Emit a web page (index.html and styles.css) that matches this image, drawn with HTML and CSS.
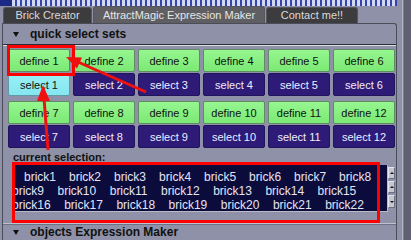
FILE: index.html
```html
<!DOCTYPE html>
<html lang="en">
<head>
    <meta charset="UTF-8">
    <title>AttractMagic Expression Maker</title>
    <link rel="stylesheet" href="styles.css">
</head>
<body>
    <div class="window">
        <div class="main">
            <div class="top-strip"></div>
            <div class="tabs">
                <div class="tab tab-brick">Brick Creator</div>
                <div class="tab tab-active">AttractMagic Expression Maker</div>
                <div class="tab tab-contact">Contact me!!</div>
            </div>

            <div class="panel">
                <div class="frame-header"><span class="caret"></span>quick select sets</div>

                <div class="sets">
                    <div class="set-group">
                        <div class="btn btn-define">define 1</div>
                        <div class="btn btn-define">define 2</div>
                        <div class="btn btn-define">define 3</div>
                        <div class="btn btn-define">define 4</div>
                        <div class="btn btn-define">define 5</div>
                        <div class="btn btn-define">define 6</div>
                        <div class="btn btn-select btn-current">select 1</div>
                        <div class="btn btn-select">select 2</div>
                        <div class="btn btn-select">select 3</div>
                        <div class="btn btn-select">select 4</div>
                        <div class="btn btn-select">select 5</div>
                        <div class="btn btn-select">select 6</div>
                    </div>
                    <div class="set-group">
                        <div class="btn btn-define">define 7</div>
                        <div class="btn btn-define">define 8</div>
                        <div class="btn btn-define">define 9</div>
                        <div class="btn btn-define">define 10</div>
                        <div class="btn btn-define">define 11</div>
                        <div class="btn btn-define">define 12</div>
                        <div class="btn btn-select">select 7</div>
                        <div class="btn btn-select">select 8</div>
                        <div class="btn btn-select">select 9</div>
                        <div class="btn btn-select">select 10</div>
                        <div class="btn btn-select">select 11</div>
                        <div class="btn btn-select">select 12</div>
                    </div>
                </div>

                <div class="selection-label">current selection:</div>
                <div class="selection-box">
                    <div class="selection-list">
                        <div class="brick-row first">
                            <span>brick1</span><span>brick2</span><span>brick3</span><span>brick4</span>
                            <span>brick5</span><span>brick6</span><span>brick7</span><span>brick8</span>
                        </div>
                        <div class="brick-row">
                            <span>brick9</span><span>brick10</span><span>brick11</span><span>brick12</span>
                            <span>brick13</span><span>brick14</span><span>brick15</span>
                        </div>
                        <div class="brick-row">
                            <span>brick16</span><span>brick17</span><span>brick18</span><span>brick19</span>
                            <span>brick20</span><span>brick21</span><span>brick22</span>
                        </div>
                    </div>
                    <div class="scrollbar">
                        <span class="sb-btn"><span class="sb-arrow up"></span></span>
                        <span class="sb-btn"><span class="sb-arrow up"></span></span>
                        <span class="sb-btn"><span class="sb-arrow down"></span></span>
                    </div>
                </div>

                <div class="frame-header bottom"><span class="caret"></span>objects Expression Maker</div>
            </div>
        </div>
        <div class="side"></div>
    </div>

    <!-- red markup drawn over the screenshot -->
    <svg class="annotations" width="411" height="240" viewBox="0 0 411 240">
        <rect x="8.5" y="46.5" width="65" height="28" fill="none" stroke="#ff0000" stroke-width="3"/>
        <rect x="13.5" y="163.5" width="365" height="58" fill="none" stroke="#ff0000" stroke-width="3"/>
        <line x1="78" y1="62" x2="146" y2="92" stroke="#f01010" stroke-width="3"/>
        <polygon points="66,57 82,57.5 77,68.5" fill="#f01010"/>
        <line x1="44" y1="98" x2="48" y2="150" stroke="#f01010" stroke-width="3"/>
        <polygon points="43,85 50,101 37,101" fill="#f01010"/>
    </svg>
</body>
</html>
```

FILE: styles.css
```css
body {
    margin: 0;
    width: 411px;
    height: 240px;
    overflow: hidden;
    position: relative;
    background: #8e91a8;
    font-family: "Liberation Sans", Arial, sans-serif;
}
.window {
    display: flex;
    height: 240px;
}
.main {
    width: 397px;
}
.side {
    width: 14px;
    background: linear-gradient(to right, #8e91a8 0 5px, #b4b6c6 5px 6px, #7c7e90 6px 7px, #5f6172 7px);
}
.top-strip {
    height: 6px;
    background:
        linear-gradient(to right, #1c2a86 0 12px, transparent 12px),
        repeating-linear-gradient(90deg, #3444a8 0 2px, #d4d9f2 2px 5px);
}
.tabs {
    display: flex;
    align-items: flex-end;
    gap: 1px;
    height: 17px;
    padding-left: 3px;
}
.tab {
    box-sizing: border-box;
    height: 16px;
    line-height: 15px;
    font-size: 11px;
    color: #dadada;
    text-align: center;
    background: #3c3c3e;
    border: 1px solid #55565e;
    border-bottom: none;
    border-radius: 3px 3px 0 0;
    white-space: nowrap;
}
.tab-brick {
    width: 89px;
}
.tab-active {
    width: 172px;
    height: 17px;
    line-height: 17px;
    background: #5f5f63;
    color: #e6e6e6;
}
.tab-contact {
    width: 92px;
}
.panel {
    box-sizing: border-box;
    height: 217px;
    margin-left: 2px;
    border: 1px solid #4a4c58;
    border-bottom: none;
    border-top-right-radius: 3px;
}
.frame-header {
    display: flex;
    align-items: center;
    height: 20px;
    padding-left: 10px;
    font-size: 12px;
    font-weight: bold;
    color: #111;
}
.caret {
    width: 0;
    height: 0;
    margin-right: 11px;
    border-left: 3.5px solid transparent;
    border-right: 3.5px solid transparent;
    border-top: 5px solid #111;
}
.sets {
    border-top: 1px solid #2c2c34;
    box-shadow: inset 0 1px #dcdce4;
    padding: 4px 0 0 5px;
}
.set-group {
    display: grid;
    grid-template-columns: repeat(6, 62px);
    grid-template-rows: 23px 23px;
    column-gap: 3px;
    row-gap: 1px;
}
.set-group + .set-group {
    margin-top: 5px;
}
.btn {
    box-sizing: border-box;
    display: flex;
    align-items: center;
    justify-content: center;
    font-size: 11px;
    border-radius: 2px;
    white-space: nowrap;
}
.btn-define {
    background: linear-gradient(#96f690, #7be974);
    border: 1px solid #5f8c63;
    color: #111;
}
.btn-select {
    background: #2d1b77;
    border: 1px solid #20145a;
    color: #eeeeff;
}
.btn-current {
    background: linear-gradient(#9af0f6, #84e6f0);
    border-color: #5e9aa4;
    color: #111;
}
.selection-label {
    height: 14px;
    line-height: 14px;
    margin-top: 2px;
    padding-left: 10px;
    font-size: 11px;
    font-weight: bold;
    color: #111;
}
.selection-box {
    display: flex;
    height: 47px;
    margin: 1px 0 0 10px;
}
.selection-list {
    width: 375px;
    padding-top: 5px;
    box-sizing: border-box;
    overflow: hidden;
    background: #0b0b3c;
    border-right: 1px solid #b8bac8;
    border-bottom: 1px solid #b8bac8;
    color: #e4e4f4;
    font-size: 12px;
}
.brick-row {
    display: flex;
    gap: 13.5px;
    height: 14px;
    line-height: 14px;
    margin-left: -1px;
    white-space: nowrap;
}
.brick-row.first {
    gap: 13px;
    margin-left: 11px;
}
.scrollbar {
    display: flex;
    flex-direction: column;
    gap: 2px;
    width: 7px;
    padding-top: 2px;
}
.sb-btn {
    display: flex;
    align-items: center;
    justify-content: center;
    box-sizing: border-box;
    height: 12px;
    background: #c4c6d2;
    border: 1px solid #e6e6ee;
    border-right-color: #6c6e7c;
    border-bottom-color: #6c6e7c;
}
.sb-btn:last-child {
    height: 13px;
}
.sb-arrow {
    width: 0;
    height: 0;
    border-left: 2px solid transparent;
    border-right: 2px solid transparent;
}
.sb-arrow.up {
    border-bottom: 2px solid #111;
}
.sb-arrow.down {
    border-top: 2px solid #111;
}
.frame-header.bottom {
    height: 16px;
    margin-top: 11px;
    border-top: 1px solid #bfc1d0;
    box-shadow: inset 0 1px #6e7084;
}
.annotations {
    position: absolute;
    top: 0;
    left: 0;
    pointer-events: none;
}
```
